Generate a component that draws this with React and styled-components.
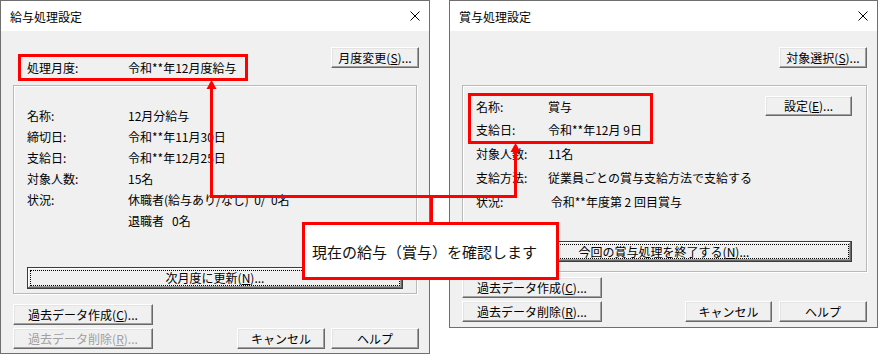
import React from "react";
import styled, { createGlobalStyle, css } from "styled-components";

const GlobalStyle = createGlobalStyle`
  html, body {
    margin: 0;
    padding: 0;
    background: #fff;
  }
  body {
    font-family: "Noto Sans CJK JP", "Noto Sans", sans-serif;
    font-size: 12px;
    color: #000;
  }
  * {
    box-sizing: border-box;
  }
`;

const App = () => {
  return (
    <>
      <GlobalStyle />
      <Stage>
        <Window $w={430} $h={354}>
          <TitleBar>
            <span>給与処理設定</span>
            <CloseIcon />
          </TitleBar>
          <Body>
            <TopRow>
              <Highlight $w={230} $h={27} $ml={5} $mt={7}>
                <Row $label={101} $h={21}>
                  <span>処理月度:</span>
                  <span>令和**年12月度給与</span>
                </Row>
              </Highlight>
              <Button $w={88}>
                月度変更(<u>S</u>)...
              </Button>
            </TopRow>
            <Group $w={404} $h={209} $pad="19px 12px 0 13px">
              <RowList>
                {SALARY_ROWS.map(([label, value]) => (
                  <Row key={label + value} $label={101} $h={21}>
                    <span>{label}</span>
                    <span>{value}</span>
                  </Row>
                ))}
              </RowList>
              <Button $default $w={376} $h={22} $mt={36}>
                次月度に更新(<u>N</u>)...
              </Button>
            </Group>
            <Footer $mt={10}>
              <ButtonColumn>
                <Button $w={140}>
                  過去データ作成(<u>C</u>)...
                </Button>
                <Button $w={140} disabled>
                  過去データ削除(<u>R</u>)...
                </Button>
              </ButtonColumn>
              <ButtonRow $gap={6}>
                <Button $w={88}>キャンセル</Button>
                <Button $w={88}>ヘルプ</Button>
              </ButtonRow>
            </Footer>
          </Body>
        </Window>

        <Window $w={429} $h={328}>
          <TitleBar>
            <span>賞与処理設定</span>
            <CloseIcon />
          </TitleBar>
          <Body>
            <TopRow $end>
              <Button $w={88}>
                対象選択(<u>S</u>)...
              </Button>
            </TopRow>
            <Group $w={405} $h={187} $pad="7px 14px 0 5px">
              <GroupHead>
                <Highlight $w={185} $h={51} $pl={5}>
                  <Row $label={72} $h={22}>
                    <span>名称:</span>
                    <span>賞与</span>
                  </Row>
                  <Row $label={72} $h={22}>
                    <span>支給日:</span>
                    <span>令和**年12月 9日</span>
                  </Row>
                </Highlight>
                <Button $w={87} $h={20} $mt={3}>
                  設定(<u>E</u>)...
                </Button>
              </GroupHead>
              <RowList $mt={-2} $ml={8}>
                {BONUS_ROWS.map(([label, value]) => (
                  <Row key={label} $label={72} $h={24}>
                    <span>{label}</span>
                    <span>{value}</span>
                  </Row>
                ))}
              </RowList>
              <Button $default $w={376} $h={21} $mt={27} $ml={8}>
                今回の賞与処理を終了する(<u>N</u>)...
              </Button>
            </Group>
            <Footer $mt={5}>
              <ButtonColumn>
                <Button $w={140}>
                  過去データ作成(<u>C</u>)...
                </Button>
                <Button $w={140}>
                  過去データ削除(<u>R</u>)...
                </Button>
              </ButtonColumn>
              <ButtonRow $gap={7}>
                <Button $w={87}>キャンセル</Button>
                <Button $w={88}>ヘルプ</Button>
              </ButtonRow>
            </Footer>
          </Body>
        </Window>

        <Connectors width="879" height="354" viewBox="0 0 879 354">
          <g stroke="#ff0000" strokeWidth="3" fill="none" strokeLinejoin="miter">
            <polyline points="211.5,88 211.5,196.5 515.5,196.5 515.5,151" />
            <line x1="431.5" y1="196" x2="431.5" y2="223" />
          </g>
          <polygon points="211.5,80 206.5,89 216.5,89" fill="#ff0000" />
          <polygon points="515.5,143 510.5,152 520.5,152" fill="#ff0000" />
        </Connectors>

        <Callout>現在の給与（賞与）を確認します</Callout>
      </Stage>
    </>
  );
};

const CloseIcon = () => (
  <svg width="10" height="10" viewBox="0 0 10 10">
    <path d="M0.5 0.5 L9.5 9.5 M9.5 0.5 L0.5 9.5" stroke="#000" strokeWidth="1" fill="none" />
  </svg>
);

const SALARY_ROWS = [
  ["名称:", "12月分給与"],
  ["締切日:", "令和**年11月30日"],
  ["支給日:", "令和**年12月25日"],
  ["対象人数:", "15名"],
  ["状況:", "休職者(給与あり/なし)  0/  0名"],
  ["", "退職者   0名"],
];

const BONUS_ROWS = [
  ["対象人数:", "11名"],
  ["支給方法:", "従業員ごとの賞与支給方法で支給する"],
  ["状況:", " 令和**年度第 2 回目賞与"],
];

export default App;

const Stage = styled.div`
  position: relative;
  width: 879px;
  height: 354px;
  display: flex;
  align-items: flex-start;
  gap: 19px;
  overflow: hidden;
`;

const Window = styled.div`
  width: ${p => p.$w}px;
  height: ${p => p.$h}px;
  flex-shrink: 0;
  border: 1px solid #6f6f6f;
  background: #f0f0f0;
  display: flex;
  flex-direction: column;
`;

const TitleBar = styled.div`
  height: 30px;
  flex-shrink: 0;
  background: #fff;
  display: flex;
  align-items: center;
  justify-content: space-between;
  padding: 0 9px 0 9px;
  font-size: 12px;
  svg {
    display: block;
  }
`;

const Body = styled.div`
  flex: 1;
  display: flex;
  flex-direction: column;
  padding: 16px 10px 0 12px;
`;

const TopRow = styled.div`
  height: 38px;
  display: flex;
  align-items: flex-start;
  justify-content: ${p => (p.$end ? "flex-end" : "space-between")};
`;

const Highlight = styled.div`
  width: ${p => p.$w}px;
  height: ${p => p.$h}px;
  margin-left: ${p => p.$ml || 0}px;
  margin-top: ${p => p.$mt || 0}px;
  border: 3px solid #ff0000;
  padding-left: ${p => p.$pl || 6}px;
  display: flex;
  flex-direction: column;
  gap: 1px;
`;

const Row = styled.div`
  display: grid;
  grid-template-columns: ${p => p.$label}px auto;
  height: ${p => p.$h}px;
  line-height: ${p => p.$h}px;
  white-space: pre;
`;

const RowList = styled.div`
  align-self: stretch;
  margin-top: ${p => p.$mt || 0}px;
  margin-left: ${p => p.$ml || 0}px;
`;

const Group = styled.div`
  width: ${p => p.$w}px;
  height: ${p => p.$h}px;
  flex-shrink: 0;
  border: 1px solid #b9b9b9;
  box-shadow: inset 1px 1px 0 #fff, 1px 1px 0 #fff;
  padding: ${p => p.$pad};
  display: flex;
  flex-direction: column;
  align-items: flex-start;
`;

const GroupHead = styled.div`
  width: 100%;
  display: flex;
  justify-content: space-between;
  align-items: flex-start;
`;

const Footer = styled.div`
  margin-top: ${p => p.$mt}px;
  display: flex;
  justify-content: space-between;
  align-items: flex-end;
`;

const ButtonColumn = styled.div`
  display: flex;
  flex-direction: column;
  gap: 3px;
`;

const ButtonRow = styled.div`
  display: flex;
  gap: ${p => p.$gap}px;
`;

const Button = styled.button`
  position: relative;
  flex-shrink: 0;
  width: ${p => p.$w}px;
  height: ${p => p.$h || 21}px;
  margin-top: ${p => p.$mt || 0}px;
  margin-left: ${p => p.$ml || 0}px;
  padding: 0;
  font-family: inherit;
  font-size: 12px;
  line-height: 1;
  color: ${p => (p.disabled ? "#a0a0a0" : "#000")};
  background: #f0f0f0;
  border: 1px solid;
  border-color: #fff #696969 #696969 #fff;
  box-shadow: inset -1px -1px 0 #a0a0a0, inset 1px 1px 0 #e3e3e3;
  display: flex;
  align-items: center;
  justify-content: center;
  u {
    text-underline-offset: 1px;
  }
  ${p =>
    p.$default &&
    css`
      border: 1px solid #3c3c3c;
      box-shadow: inset -1px -1px 0 #696969, inset 1px 1px 0 #fff,
        inset -2px -2px 0 #a0a0a0;
      &::after {
        content: "";
        position: absolute;
        inset: 2px;
        border: 1px dotted #000;
      }
    `}
`;

const Connectors = styled.svg`
  position: absolute;
  left: 0;
  top: 0;
  pointer-events: none;
`;

const Callout = styled.div`
  position: absolute;
  left: 302px;
  top: 222px;
  width: 257px;
  height: 58px;
  border: 3px solid #ff0000;
  background: #fff;
  padding-left: 7px;
  display: flex;
  align-items: center;
  font-size: 15px;
  color: #111;
`;
